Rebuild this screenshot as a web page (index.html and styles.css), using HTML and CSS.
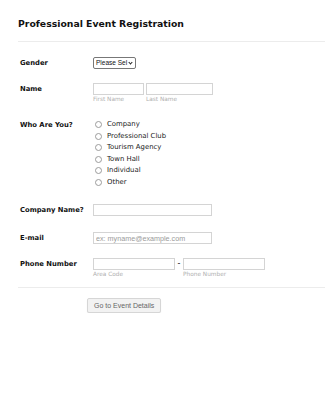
FILE: index.html
```html
<!DOCTYPE html>
<html lang="en">
<head>
  <meta charset="UTF-8" />
  <meta name="viewport" content="width=device-width, initial-scale=1.0"/>
  <title>Professional Event Registration</title>
  <link rel="stylesheet" href="styles.css">
</head>
<body>
  <div id="form-wrap">
    <h2 id="form-title">Professional Event Registration</h2>

    <form id="reg-form">
      <div class="row row-gender">
        <label class="field-label">Gender</label>
        <div class="field">
          <div class="select">Please Sel<span class="caret"></span></div>
        </div>
      </div>

      <div class="row row-name">
        <label class="field-label">Name</label>
        <div class="field split">
          <div class="sub">
            <input class="box first" />
            <span class="hint">First Name</span>
          </div>
          <div class="sub">
            <input class="box last" />
            <span class="hint">Last Name</span>
          </div>
        </div>
      </div>

      <div class="row row-who">
        <label class="field-label">Who Are You?</label>
        <div class="field radios">
          <label class="radio"><input type="radio" name="who" /> Company</label>
          <label class="radio"><input type="radio" name="who" /> Professional Club</label>
          <label class="radio"><input type="radio" name="who" /> Tourism Agency</label>
          <label class="radio"><input type="radio" name="who" /> Town Hall</label>
          <label class="radio"><input type="radio" name="who" /> Individual</label>
          <label class="radio"><input type="radio" name="who" /> Other</label>
        </div>
      </div>

      <div class="row row-company">
        <label class="field-label">Company Name?</label>
        <div class="field">
          <input class="box wide" />
        </div>
      </div>

      <div class="row row-email">
        <label class="field-label">E-mail</label>
        <div class="field">
          <input class="box wide" placeholder="ex: myname@example.com" />
        </div>
      </div>

      <div class="row row-phone">
        <label class="field-label">Phone Number</label>
        <div class="field split">
          <div class="sub">
            <input class="box phone" />
            <span class="hint">Area Code</span>
          </div>
          <span class="dash">-</span>
          <div class="sub">
            <input class="box phone" />
            <span class="hint">Phone Number</span>
          </div>
        </div>
      </div>

      <div class="actions">
        <button type="button" id="next">Go to Event Details</button>
      </div>
    </form>
  </div>
</body>
</html>
```

FILE: styles.css
```css
* {
  box-sizing: border-box;
}

body {
  margin: 0;
  background: #ffffff;
  color: #111111;
  font-family: "DejaVu Sans", Verdana, sans-serif;
}

#form-wrap {
  padding: 17px 0 0 18px;
}

#form-title {
  margin: 0;
  font-size: 9.3px;
  font-weight: bold;
  line-height: 14px;
  padding-bottom: 10px;
  border-bottom: 1px solid #ececec;
}

#reg-form {
  padding-left: 2px;
}

.row {
  display: flex;
  align-items: flex-start;
}

.field-label {
  width: 73px;
  flex-shrink: 0;
  font-size: 6.8px;
  font-weight: bold;
  line-height: 12px;
}

.row-gender { margin-top: 15px; }
.row-name { margin-top: 14px; }
.row-who { margin-top: 15px; }
.row-company { margin-top: 16px; }
.row-email { margin-top: 16px; }
.row-phone { margin-top: 14px; }

.select {
  width: 43px;
  height: 12px;
  border: 1px solid #777;
  border-radius: 2px;
  font-family: "Liberation Sans", Arial, sans-serif;
  font-size: 6.5px;
  line-height: 10px;
  padding-left: 2px;
  position: relative;
  overflow: hidden;
  white-space: nowrap;
}

.caret {
  position: absolute;
  right: 3px;
  top: 3px;
  width: 3px;
  height: 3px;
  border-right: 1px solid #222;
  border-bottom: 1px solid #222;
  transform: rotate(45deg);
  background: #fff;
}

.split {
  display: flex;
  align-items: flex-start;
  gap: 2px;
}

.row-phone .split {
  gap: 1px;
}

.sub {
  display: flex;
  flex-direction: column;
}

.box {
  display: block;
  height: 12px;
  margin: 0;
  padding: 0 2px;
  border: 1px solid #d4d4d4;
  border-radius: 0;
  font-family: "Liberation Sans", Arial, sans-serif;
  font-size: 7.2px;
  color: #333;
  outline: none;
}

.box::placeholder {
  color: #9a9a9a;
}

.first { width: 51px; }
.last { width: 67px; }
.wide { width: 119px; }
.phone { width: 82px; }

.hint {
  font-size: 5.8px;
  color: #b0b0b0;
  line-height: 9px;
}

.dash {
  width: 6px;
  text-align: center;
  font-size: 8px;
  line-height: 11px;
}

.radios {
  display: flex;
  flex-direction: column;
}

.radio {
  display: flex;
  align-items: center;
  gap: 5px;
  font-size: 6.9px;
  line-height: 11.5px;
  color: #222;
  padding-left: 2px;
}

.radio input {
  appearance: none;
  -webkit-appearance: none;
  margin: 0;
  width: 7px;
  height: 7px;
  border: 1px solid #9c9c9c;
  border-radius: 50%;
  background: #fff;
}

.actions {
  display: flex;
  margin-top: 8px;
  margin-left: -2px;
  border-top: 1px solid #ececec;
  padding: 10px 0 0 69px;
}

#next {
  height: 15px;
  padding: 0 6px;
  background: #f2f2f2;
  border: 1px solid #d6d6d6;
  border-radius: 2px;
  font-family: "Liberation Sans", Arial, sans-serif;
  font-size: 7px;
  color: #666;
  box-shadow: 0 1px 1px rgba(0, 0, 0, 0.08);
}
```
